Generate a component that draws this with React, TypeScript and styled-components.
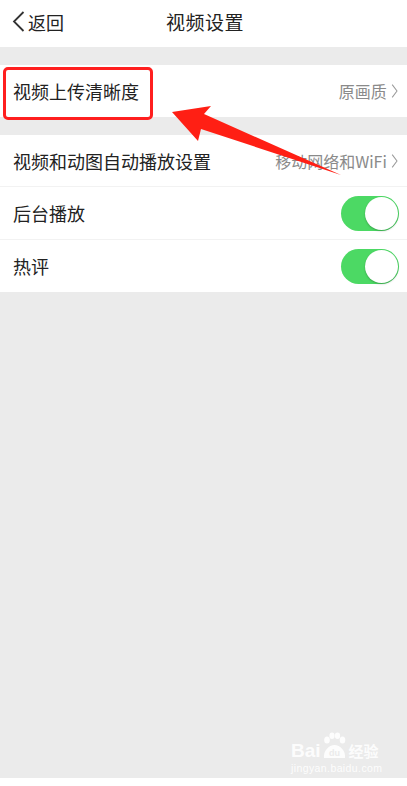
import styled, { createGlobalStyle } from "styled-components";

const GlobalStyle = createGlobalStyle`
  html, body {
    margin: 0;
    padding: 0;
    background: #ebebeb;
  }
  body {
    font-family: "Noto Sans CJK SC", "Noto Sans", sans-serif;
    color: #1f1f1f;
  }
`;

const Page = styled.div`
  position: relative;
  width: 407px;
  height: 786px;
  display: flex;
  flex-direction: column;
  overflow: hidden;
  background: #ebebeb;
`;

const Header = styled.div`
  height: 47px;
  box-sizing: border-box;
  padding-bottom: 4px;
  background: #fff;
  display: flex;
  align-items: center;
  position: relative;
  justify-content: center;
`;

// back button sits over the header on the left
const Back = styled.div`
  position: absolute;
  left: 12px;
  top: 0;
  height: 43px;
  display: flex;
  align-items: center;
  gap: 3px;
  font-size: 18px;
  color: #222;
`;

const Title = styled.div`
  font-size: 19px;
  color: #222;
  letter-spacing: 0.5px;
  margin-left: 3px;
`;

const Section = styled.div<{ mt: number }>`
  margin-top: ${(p) => p.mt}px;
  background: #fff;
  display: flex;
  flex-direction: column;
`;

const Row = styled.div<{ h: number }>`
  height: ${(p) => p.h}px;
  display: flex;
  align-items: center;
  justify-content: space-between;
  padding: 0 9px 0 13px;
  & + & {
    border-top: 1px solid #f2f2f2;
  }
`;

const Label = styled.div`
  font-size: 18px;
  color: #222;
`;

const Value = styled.div`
  display: flex;
  align-items: center;
  gap: 4px;
  font-size: 16px;
  color: #8a8a8a;
`;

const Toggle = styled.div`
  width: 58px;
  height: 35px;
  border-radius: 18px;
  background: #4cd964;
  display: flex;
  align-items: center;
  justify-content: flex-end;
  padding-right: 1px;
  box-sizing: border-box;
  margin-right: -1px;
`;

const Knob = styled.div`
  width: 33px;
  height: 33px;
  border-radius: 50%;
  background: #fff;
  box-shadow: 0 1px 2px rgba(0, 0, 0, 0.25);
`;

const Spacer = styled.div`
  flex: 1;
`;

const Footer = styled.div`
  height: 8px;
  background: #fff;
`;

const Highlight = styled.div`
  position: absolute;
  left: 3px;
  top: 67px;
  width: 150px;
  height: 53px;
  border: 3px solid #ff1f1f;
  border-radius: 5px;
  box-sizing: border-box;
`;

const Arrow = styled.svg`
  position: absolute;
  left: 0;
  top: 0;
  pointer-events: none;
`;

const Watermark = styled.div`
  position: absolute;
  left: 291px;
  top: 732px;
  display: flex;
  flex-direction: column;
  align-items: flex-start;
  color: rgba(255, 255, 255, 0.9);
  font-family: "Liberation Sans", "Noto Sans CJK SC", sans-serif;
`;

const Brand = styled.div`
  display: flex;
  align-items: flex-end;
  font-size: 19px;
  font-weight: bold;
  line-height: 19px;
  height: 28px;
`;

const BrandCn = styled.span`
  font-family: "Noto Sans CJK SC", sans-serif;
  font-size: 15px;
  font-weight: bold;
  line-height: 19px;
  margin-left: 1px;
`;

const Site = styled.div`
  font-size: 10.5px;
  letter-spacing: 0.4px;
  margin-top: 2px;
`;

const Chevron = ({ size = 16, color = "#9a9a9a" }: { size?: number; color?: string }) => (
  <svg width={size * 0.45} height={size} viewBox="0 0 9 20">
    <polyline points="1.5,2 7.5,10 1.5,18" fill="none" stroke={color} strokeWidth="1.3" />
  </svg>
);

const wm = "rgba(255,255,255,0.9)";

function App() {
  return (
    <>
      <GlobalStyle />
      <Page>
        <Header>
          <Back>
            <svg width="13" height="21" viewBox="0 0 13 21">
              <polyline points="11.5,1 2,10.5 11.5,20" fill="none" stroke="#333" strokeWidth="1.8" />
            </svg>
            <span>返回</span>
          </Back>
          <Title>视频设置</Title>
        </Header>

        <Section mt={18}>
          <Row h={52}>
            <Label>视频上传清晰度</Label>
            <Value>
              原画质
              <Chevron />
            </Value>
          </Row>
        </Section>

        <Section mt={18}>
          <Row h={51}>
            <Label>视频和动图自动播放设置</Label>
            <Value>
              移动网络和WiFi
              <Chevron />
            </Value>
          </Row>
          <Row h={52}>
            <Label>后台播放</Label>
            <Toggle>
              <Knob />
            </Toggle>
          </Row>
          <Row h={52}>
            <Label>热评</Label>
            <Toggle>
              <Knob />
            </Toggle>
          </Row>
        </Section>

        <Spacer />
        <Footer />

        <Highlight />
        <Arrow width="407" height="786" viewBox="0 0 407 786">
          <polygon
            points="172,112 211,106 204,114 341,175 201,129 198,141"
            fill="#ff1f14"
          />
        </Arrow>

        <Watermark>
          <Brand>
            <span>Bai</span>
            <svg width="27" height="28" viewBox="0 0 27 28">
              <ellipse cx="6" cy="8" rx="2.8" ry="3.6" fill={wm} />
              <ellipse cx="11" cy="3.8" rx="2.6" ry="3.3" fill={wm} />
              <ellipse cx="16.5" cy="3.8" rx="2.6" ry="3.3" fill={wm} />
              <ellipse cx="21.5" cy="8" rx="2.8" ry="3.6" fill={wm} />
              <path d="M3 26 C2 19 8 13 13.5 13 C19 13 25 19 24 26 Z" fill={wm} />
              <text x="13.5" y="24" fontSize="9" textAnchor="middle" fill="#ebebeb" fontFamily="Liberation Sans, sans-serif" fontWeight="bold">
                du
              </text>
            </svg>
            <BrandCn>经验</BrandCn>
          </Brand>
          <Site>jingyan.baidu.com</Site>
        </Watermark>
      </Page>
    </>
  );
}

export default App;
